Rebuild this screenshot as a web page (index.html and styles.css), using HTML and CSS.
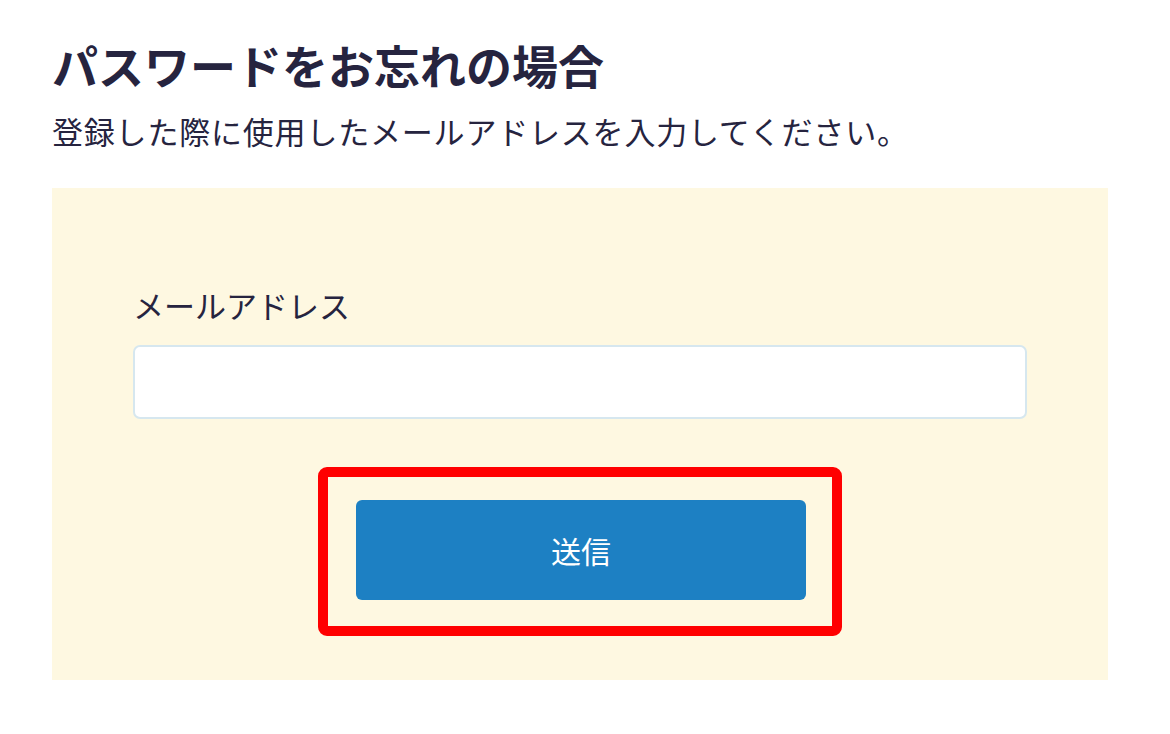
FILE: index.html
```html
<!DOCTYPE html>
<html lang="ja">
<head>
<meta charset="utf-8">
<title>パスワードをお忘れの場合</title>
<link rel="stylesheet" href="styles.css">
</head>
<body>
<main class="page">
  <h1 class="title">パスワードをお忘れの場合</h1>
  <p class="lead">登録した際に使用したメールアドレスを入力してください。</p>
  <form class="panel">
    <label class="label" for="email">メールアドレス</label>
    <input class="input" id="email" type="email">
    <div class="actions">
      <div class="highlight">
        <button class="submit" type="button">送信</button>
      </div>
    </div>
  </form>
</main>
</body>
</html>
```

FILE: styles.css
```css
html, body {
  margin: 0;
  padding: 0;
  background: #ffffff;
}

body {
  font-family: "Noto Sans CJK JP", "Noto Sans", sans-serif;
  color: #26243f;
}

.page {
  padding: 31px 62px 0 52px;
}

.title {
  margin: 0;
  font-size: 46px;
  line-height: 66px;
  font-weight: 700;
  color: #26243f;
}

.lead {
  margin: 14px 0 0;
  font-size: 31px;
  line-height: 40px;
  letter-spacing: 0.8px;
  font-weight: 400;
}

.panel {
  margin-top: 37px;
  width: 1056px;
  box-sizing: border-box;
  background: #fef8e1;
  padding: 97px 81px 44px;
  display: flex;
  flex-direction: column;
}

.label {
  font-size: 31px;
  line-height: 40px;
}

.input {
  margin-top: 20px;
  height: 74px;
  box-sizing: border-box;
  border: 2px solid #d6e7ef;
  border-radius: 7px;
  background: #ffffff;
  font-size: 24px;
  padding: 0 16px;
  outline: none;
}

.actions {
  margin-top: 48px;
  display: flex;
  justify-content: center;
}

.highlight {
  border: 10px solid #ff0000;
  border-radius: 9px;
  padding: 23px 26px 26px 28px;
}

.submit {
  display: block;
  width: 450px;
  height: 100px;
  border: none;
  border-radius: 6px;
  background: #1d80c3;
  color: #ffffff;
  font-family: "Noto Sans CJK JP", "Noto Sans", sans-serif;
  font-size: 30px;
  cursor: pointer;
}
```
